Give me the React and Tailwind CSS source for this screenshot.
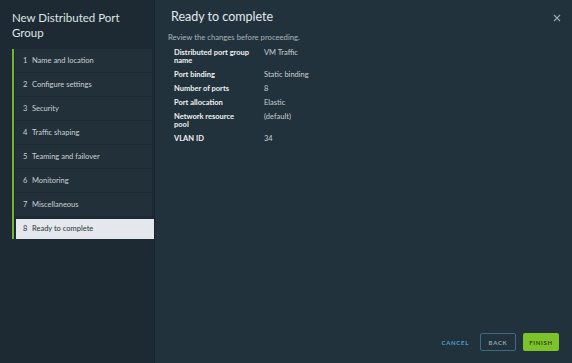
import React from "react";

const steps = [
  "Name and location",
  "Configure settings",
  "Security",
  "Traffic shaping",
  "Teaming and failover",
  "Monitoring",
  "Miscellaneous",
  "Ready to complete",
];

const rows = [
  [["Distributed port group", "name"], "VM Traffic"],
  [["Port binding"], "Static binding"],
  [["Number of ports"], "8"],
  [["Port allocation"], "Elastic"],
  [["Network resource", "pool"], "(default)"],
  [["VLAN ID"], "34"],
];

export default function App() {
  return (
    <div
      className="w-[572px] h-[363px] flex overflow-hidden"
      style={{ fontFamily: "Lato, 'Liberation Sans', sans-serif" }}
    >
      <aside className="w-[155px] h-full bg-[#1d2a33] flex flex-col border-r border-[#18232b]">
        <div className="pl-[12px] pt-[10px] pr-[6px] text-[11.5px] leading-[15px] text-[#dfe4e7]">
          New Distributed Port Group
        </div>
        <div className="mt-[9px] ml-[12px] border-l-2 border-[#6fb531] flex flex-col">
          {steps.map((s, i) => {
            const active = i === steps.length - 1;
            return (
              <div
                key={s}
                className={
                  active
                    ? "h-[20px] mt-[2px] ml-[2px] mr-0 flex items-center bg-[#e4e7eb] text-[#2a3540] text-[7.5px] pl-[7px]"
                    : "h-[23px] mb-[1px] ml-[1px] mr-[2px] flex items-center bg-[#223039] text-[#c9d0d4] text-[7.5px] pl-[8px]"
                }
              >
                <span className="w-[9px]">{i + 1}</span>
                <span>{s}</span>
              </div>
            );
          })}
        </div>
      </aside>
      <main className="flex-1 h-full bg-[#22323c] flex flex-col relative">
        <button className="absolute right-[10px] top-[13px] w-[10px] h-[10px] flex items-center justify-center">
          <svg width="8" height="8" viewBox="0 0 8 8" fill="none">
            <path d="M1 1L7 7M7 1L1 7" stroke="#9aa6ad" strokeWidth="1.2" />
          </svg>
        </button>
        <div className="pl-[16px] pt-[9px] text-[12.5px] leading-[16px] text-[#e3e8eb]">
          Ready to complete
        </div>
        <div className="pl-[13px] mt-[8px] text-[7.7px] leading-[9px] text-[#aab4ba]">
          Review the changes before proceeding.
        </div>
        <div className="pl-[19px] mt-[7px] grid grid-cols-[90px_auto] gap-y-[6px] text-[7.5px] leading-[8px]">
          {rows.map(([k, v]) => (
            <React.Fragment key={v}>
              <div className="font-bold text-[#eef1f3]">
                {k.map((line) => (
                  <div key={line}>{line}</div>
                ))}
              </div>
              <div className="text-[#c9d0d4]">{v}</div>
            </React.Fragment>
          ))}
        </div>
        <div className="flex-1" />
        <div className="flex items-center justify-end pr-[13px] pb-[12px]">
          <button className="h-[18px] px-[2px] mr-[9px] text-[6px] font-bold tracking-[0.7px] text-[#4aa3c9]">
            CANCEL
          </button>
          <button className="h-[18px] w-[36px] mr-[7px] border border-[#3d6b86] rounded-[2px] text-[6px] font-bold tracking-[0.7px] text-[#8fa6b5]">
            BACK
          </button>
          <button className="h-[18px] w-[36px] bg-[#7cc32b] rounded-[2px] text-[6px] font-bold tracking-[0.7px] text-[#2d4a16]">
            FINISH
          </button>
        </div>
      </main>
    </div>
  );
}
